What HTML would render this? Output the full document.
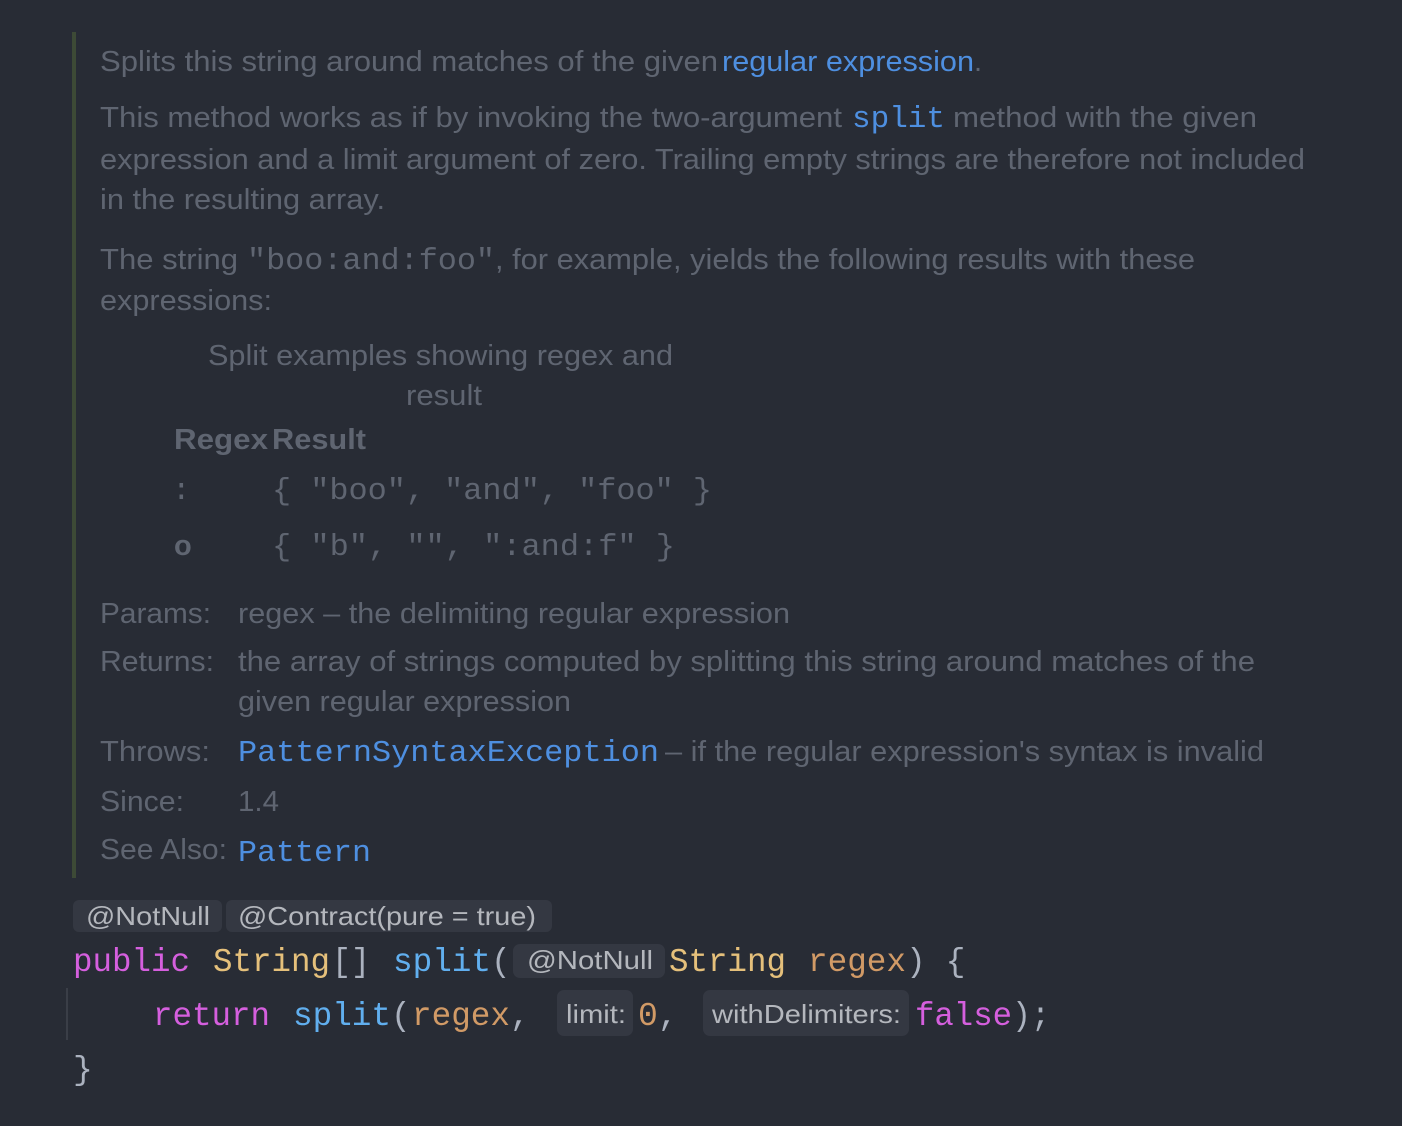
<!DOCTYPE html>
<html><head><meta charset="utf-8"><style>
html,body{margin:0;padding:0;background:#282c35;}
svg{display:block}
.d{font-family:"Liberation Sans",sans-serif;font-size:29px;fill:#5f6571}
.m{font-family:"Liberation Mono",monospace;font-size:31px}
.c{font-family:"Liberation Mono",monospace;font-size:33px}
.b{fill:#4e8fe0}
.h{font-family:"Liberation Sans",sans-serif;font-size:26px;fill:#b4b7bd}
</style></head><body>
<svg width="1402" height="1126" viewBox="0 0 1402 1126" xmlns="http://www.w3.org/2000/svg">
<rect width="1402" height="1126" fill="#282c35"/>
<rect x="72" y="32" width="4" height="846" fill="#3d4a36"/>
<g transform="translate(0,-1)">
<text class="d" x="100" y="72" textLength="618" lengthAdjust="spacingAndGlyphs">Splits this string around matches of the given</text>
<text class="d b" x="722" y="72" textLength="252" lengthAdjust="spacingAndGlyphs">regular expression</text>
<text class="d" x="974" y="72">.</text>

<text class="d" x="100" y="128" textLength="742" lengthAdjust="spacingAndGlyphs">This method works as if by invoking the two-argument</text>
<text class="m b" x="852" y="128" textLength="93" lengthAdjust="spacingAndGlyphs">split</text>
<text class="d" x="953" y="128" textLength="304" lengthAdjust="spacingAndGlyphs">method with the given</text>
<text class="d" x="100" y="170" textLength="1205" lengthAdjust="spacingAndGlyphs">expression and a limit argument of zero. Trailing empty strings are therefore not included</text>
<text class="d" x="100" y="210" textLength="285" lengthAdjust="spacingAndGlyphs">in the resulting array.</text>

<text class="d" x="100" y="270" textLength="138" lengthAdjust="spacingAndGlyphs">The string</text>
<text class="m" fill="#5f6571" x="247" y="270" textLength="248" lengthAdjust="spacingAndGlyphs">"boo:and:foo"</text>
<text class="d" x="495" y="270" textLength="700" lengthAdjust="spacingAndGlyphs">, for example, yields the following results with these</text>
<text class="d" x="100" y="311" textLength="172" lengthAdjust="spacingAndGlyphs">expressions:</text>

<text class="d" x="208" y="366" textLength="465" lengthAdjust="spacingAndGlyphs">Split examples showing regex and</text>
<text class="d" x="406" y="406" textLength="76" lengthAdjust="spacingAndGlyphs">result</text>
<text class="d" font-weight="bold" fill="#6e7480" x="174" y="450" textLength="94" lengthAdjust="spacingAndGlyphs">Regex</text>
<text class="d" font-weight="bold" fill="#6e7480" x="272" y="450" textLength="94" lengthAdjust="spacingAndGlyphs">Result</text>
<text class="m" fill="#5f6571" x="172" y="500">:</text>
<text class="m" fill="#5f6571" x="272" y="500" textLength="440" lengthAdjust="spacingAndGlyphs">{ "boo", "and", "foo" }</text>
<text class="d" font-weight="bold" fill="#6e7480" x="174" y="556">o</text>
<text class="m" fill="#5f6571" x="272" y="556" textLength="403" lengthAdjust="spacingAndGlyphs">{ "b", "", ":and:f" }</text>

<text class="d" x="100" y="624" textLength="111" lengthAdjust="spacingAndGlyphs">Params:</text>
<text class="d" x="238" y="624" textLength="552" lengthAdjust="spacingAndGlyphs">regex – the delimiting regular expression</text>
<text class="d" x="100" y="672" textLength="114" lengthAdjust="spacingAndGlyphs">Returns:</text>
<text class="d" x="238" y="672" textLength="1017" lengthAdjust="spacingAndGlyphs">the array of strings computed by splitting this string around matches of the</text>
<text class="d" x="238" y="712" textLength="333" lengthAdjust="spacingAndGlyphs">given regular expression</text>
<text class="d" x="100" y="762" textLength="110" lengthAdjust="spacingAndGlyphs">Throws:</text>
<text class="m b" x="238" y="762" textLength="421" lengthAdjust="spacingAndGlyphs">PatternSyntaxException</text>
<text class="d" x="665" y="762" textLength="599" lengthAdjust="spacingAndGlyphs">– if the regular expression's syntax is invalid</text>
<text class="d" x="100" y="812" textLength="84" lengthAdjust="spacingAndGlyphs">Since:</text>
<text class="d" x="238" y="812" textLength="41" lengthAdjust="spacingAndGlyphs">1.4</text>
<text class="d" x="100" y="860" textLength="127" lengthAdjust="spacingAndGlyphs">See Also:</text>
<text class="m b" x="238" y="862" textLength="133" lengthAdjust="spacingAndGlyphs">Pattern</text>

<rect x="73" y="901" width="149" height="32" rx="6" fill="#343842"/>
<rect x="226" y="901" width="326" height="32" rx="6" fill="#343842"/>
<text class="h" x="86" y="926" textLength="124" lengthAdjust="spacingAndGlyphs">@NotNull</text>
<text class="h" x="238" y="926" textLength="298" lengthAdjust="spacingAndGlyphs">@Contract(pure = true)</text>

<text class="c" x="73" y="972" fill="#d55fde" textLength="117" lengthAdjust="spacingAndGlyphs">public</text>
<text class="c" x="213" y="972" fill="#e5c07b" textLength="117" lengthAdjust="spacingAndGlyphs">String</text>
<text class="c" x="332" y="972" fill="#abb2bf" textLength="38" lengthAdjust="spacingAndGlyphs">[]</text>
<text class="c" x="393" y="972" fill="#61afef" textLength="98" lengthAdjust="spacingAndGlyphs">split</text>
<text class="c" x="491" y="972" fill="#abb2bf">(</text>
<rect x="513" y="945" width="152" height="34" rx="7" fill="#343842"/>
<text class="h" x="527" y="970" textLength="126" lengthAdjust="spacingAndGlyphs">@NotNull</text>
<text class="c" x="669" y="972" fill="#e5c07b" textLength="117" lengthAdjust="spacingAndGlyphs">String</text>
<text class="c" x="808" y="972" fill="#d19a66" textLength="98" lengthAdjust="spacingAndGlyphs">regex</text>
<text class="c" x="906" y="972" fill="#abb2bf">) {</text>

<rect x="66" y="989" width="2" height="52" fill="#3a3e47"/>
<text class="c" x="153" y="1026" fill="#d55fde" textLength="117" lengthAdjust="spacingAndGlyphs">return</text>
<text class="c" x="293" y="1026" fill="#61afef" textLength="98" lengthAdjust="spacingAndGlyphs">split</text>
<text class="c" x="391" y="1026" fill="#abb2bf">(</text>
<text class="c" x="412" y="1026" fill="#d19a66" textLength="98" lengthAdjust="spacingAndGlyphs">regex</text>
<text class="c" x="510" y="1026" fill="#abb2bf">,</text>
<rect x="557" y="991" width="76" height="46" rx="7" fill="#343842"/>
<text class="h" x="566" y="1024" textLength="60" lengthAdjust="spacingAndGlyphs">limit:</text>
<text class="c" x="638" y="1026" fill="#d19a66">0</text>
<text class="c" x="658" y="1026" fill="#abb2bf">,</text>
<rect x="703" y="991" width="206" height="46" rx="7" fill="#343842"/>
<text class="h" x="712" y="1024" textLength="189" lengthAdjust="spacingAndGlyphs">withDelimiters:</text>
<text class="c" x="915" y="1026" fill="#d55fde" textLength="97" lengthAdjust="spacingAndGlyphs">false</text>
<text class="c" x="1012" y="1026" fill="#abb2bf" textLength="38" lengthAdjust="spacingAndGlyphs">);</text>

<text class="c" x="73" y="1080" fill="#abb2bf">}</text>
</g>
</svg>
</body></html>
